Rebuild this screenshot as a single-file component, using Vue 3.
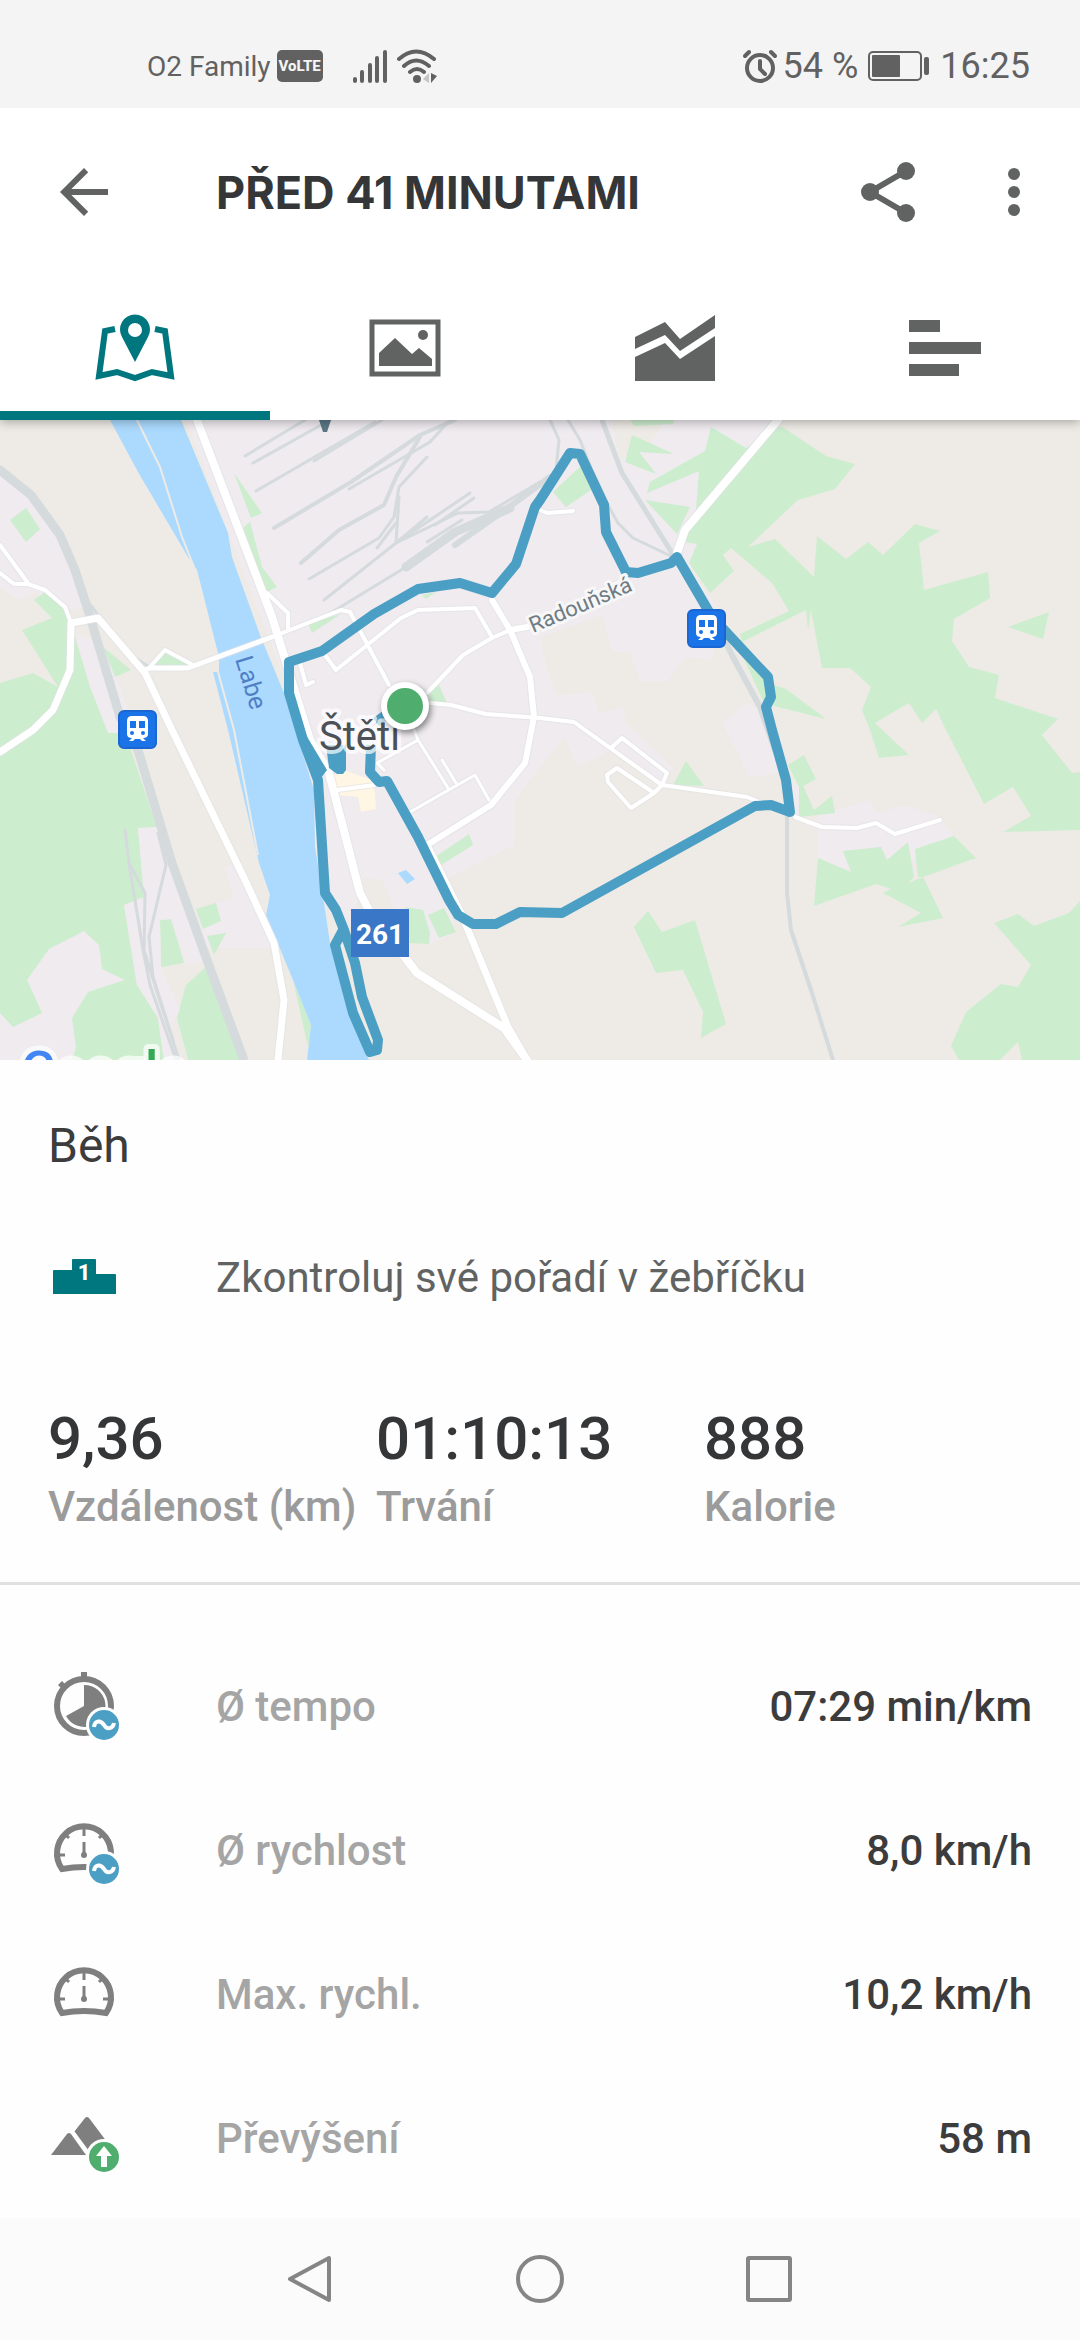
<script setup>
import { ref } from "vue";

const tabs = [
  { id: "map", label: "Mapa" },
  { id: "photos", label: "Fotky" },
  { id: "charts", label: "Grafy" },
  { id: "splits", label: "Mezičasy" },
];
const activeTab = ref("map");

const summary = [
  { label: "Vzdálenost (km)", value: "9,36" },
  { label: "Trvání", value: "01:10:13" },
  { label: "Kalorie", value: "888" },
];

const details = [
  { icon: "pace", badge: "avg", label: "Ø tempo", value: "07:29 min/km" },
  { icon: "speed", badge: "avg", label: "Ø rychlost", value: "8,0 km/h" },
  { icon: "speed", label: "Max. rychl.", value: "10,2 km/h" },
  { icon: "hills", badge: "up", label: "Převýšení", value: "58 m" },
];

// map layers
const urban = [
  "0,47 31,70 65,113 90,187 69,190 34,173 17,180 0,167",
  "75,213 103,223 140,320 108,313 90,267",
  "186,0 611,0 620,40 650,25 665,0 770,0 683,125 697,124 690,150 720,190 712,240 685,237 667,262 640,262 630,232 612,232 602,195 540,217 547,250 557,275 593,272 599,293 623,287 626,303 674,348 660,363 611,330 578,347 564,317 540,347 515,380 515,425 444,460 456,513 430,524 395,490 382,460 363,458 355,490 345,520 324,483 300,300",
  "722,303 747,283 764,290 778,353 750,358",
  "788,360 799,367 799,397 788,390",
  "817,397 836,390 870,380 877,393 905,385 939,397 953,415 915,440 880,460 850,455 818,438",
  "224,447 238,443 265,500 270,528 207,528 196,490 234,477",
];
const greens = [
  "26,88 40,109 26,122 10,100",
  "34,180 45,172 69,190 71,203 75,217 90,267 108,313 125,313 157,407 138,408 145,477 124,485 137,565 158,598 164,640 0,640 0,263 33,253 58,267 22,210 52,198",
  "103,227 131,250 115,257",
  "149,245 165,231 196,245",
  "234,53 262,93 251,98",
  "250,102 262,147 277,167 267,172 243,108",
  "308,203 341,194 312,213",
  "422,175 436,172 426,179",
  "429,273 439,265 447,283 430,283",
  "160,500 171,499 184,543 161,547",
  "196,489 216,483 221,501 203,509",
  "207,516 226,513 214,535",
  "208,545 241,640 188,640 177,598 186,565",
  "293,560 311,605 308,627",
  "435,437 469,414 473,425 441,445",
  "406,487 423,490 430,513 429,524 410,523",
  "428,495 444,488 456,512 439,518",
  "630,0 674,0 673,4 635,6",
  "632,15 674,34 639,32 656,54 625,42",
  "553,72 581,46 591,70 566,87",
  "711,7 746,28 781,6 826,36 855,44 835,69 798,80 748,127 775,119 814,157 817,116 846,139 868,122 883,135 915,104 940,111 919,123 924,170 988,152 990,178 954,199 952,221 969,247 999,255 995,278 1058,299 1042,315 1072,353 1080,352 1080,410 1003,412 1031,396 1013,367 984,384 946,310 936,289 922,303 909,283 875,303 909,335 879,338 870,310 862,290 871,267 850,248 822,248 811,190 808,210 806,190 742,222 740,214 789,191 772,163 731,128 723,135 734,151 710,173 689,143 697,124 685,122 696,90 699,51 647,73 650,62 705,31",
  "645,80 690,87 677,114",
  "1008,207 1049,192 1043,219",
  "774,265 786,269 826,299 774,286",
  "743,237 768,262 765,285",
  "673,365 686,341 704,366",
  "788,345 804,335 816,359 803,366 814,390 832,376 835,393 799,397 799,367",
  "818,438 851,452 843,431 881,427 887,440 908,422 914,457 908,463 923,457 943,498 898,507 921,493 883,473 891,469 876,464 814,486",
  "915,429 954,416 976,438 923,457 918,457",
  "648,491 662,512 695,500 726,604 701,618 703,592 683,550 656,553 634,507",
  "994,503 1018,494 1034,506 1069,493 1080,481 1080,640 1022,640 1018,622 1000,640 959,640 951,626 966,592 1001,564 1018,567 1031,545",
];
const clearings = [
  "27,560 49,529 84,511 99,525 102,549 125,560 88,572 72,598 76,628 72,640 0,640 0,593 13,607 42,593",
  "138,408 157,407 205,543 186,545 171,499 160,500 161,547 180,590 172,605 176,640 164,640 158,598 137,565 124,485 144,477",
];
const rails = [
  { width: 9, points: "0,50 31,75 60,115 75,150 88,190 120,297 138,330 172,443 207,540 244,640" },
  { width: 3, points: "88,182 110,210 130,235 148,246 190,247" },
  { width: 3, points: "125,410 129,443 143,530 150,565 176,640" },
  { width: 3, points: "129,443 145,473 144,530 158,575 179,640" },
  { width: 3, points: "158,413 166,445 149,517 153,557 173,620" },
  { width: 3, points: "245,36 305,0" },
  { width: 3, points: "253,43 330,0" },
  { width: 3, points: "314,41 382,0" },
  { width: 3, points: "256,71 375,2" },
  { width: 4, points: "274,108 351,62 420,15 455,0" },
  { width: 3, points: "349,69 430,22 450,0" },
  { width: 4, points: "301,143 339,110 384,85 396,57 420,17" },
  { width: 3, points: "309,159 379,118 394,97 399,67 427,37" },
  { width: 3, points: "399,77 396,123" },
  { width: 3, points: "324,180 396,123 458,93 489,92 540,62" },
  { width: 3, points: "377,128 396,103" },
  { width: 3, points: "396,123 427,97" },
  { width: 3, points: "396,123 470,73" },
  { width: 3, points: "435,105 474,78" },
  { width: 3, points: "324,197 406,147" },
  { width: 9, points: "406,147 455,112 510,88" },
  { width: 6, points: "455,125 505,90 550,57" },
  { width: 3, points: "427,122 462,100" },
  { width: 3, points: "550,0 559,20 556,50 545,70" },
  { width: 3, points: "568,0 580,20 592,50 609,87 618,103 633,118 673,137" },
  { width: 5, points: "602,0 622,53 672,133" },
  { width: 6, points: "678,137 709,190 733,237 760,287 775,330" },
  { width: 4, points: "787,397 787,473 791,510 812,573 833,640" },
];
const roads = [
  { width: 8, points: "197,0 272,197 310,320 329,353 360,473 370,492 417,553 504,608 527,640" },
  { width: 7, points: "427,425 461,493 508,607 527,640" },
  { width: 6, points: "492,180 510,210 530,257 534,297 525,343 491,385 427,425" },
  { width: 6, points: "510,210 527,207 626,160" },
  { width: 8, points: "778,0 685,110 677,133" },
  { width: 7, points: "0,332 33,310 53,290 70,250 71,203 98,198 145,253 172,310 245,460 274,523 284,580 278,640" },
  { width: 4, points: "0,153 14,164 28,164 45,170 65,187 71,203" },
  { width: 4, points: "0,125 28,163" },
  { width: 5, points: "145,250 150,248 188,248 272,217" },
  { width: 4, points: "272,217 341,190 350,192 358,207 389,265" },
  { width: 4, points: "150,247 165,230 193,245" },
  { width: 4, points: "267,173 288,193 288,210" },
  { width: 4, points: "325,235 336,250 401,198 418,190 475,188 492,217" },
  { width: 4, points: "427,273 463,235 492,218 510,210" },
  { width: 4, points: "300,243 306,265 313,262" },
  { width: 4, points: "430,283 451,285 486,294 540,298 574,302 585,310 662,365 747,377 762,383" },
  { width: 4, points: "612,327 622,318 667,353 662,365 654,373 617,348 607,355 608,362 631,388 654,373" },
  { width: 4, points: "795,397 822,407 857,408 876,403 895,414 940,400" },
  { width: 3, points: "384,350 377,343 418,320 448,368" },
  { width: 3, points: "418,320 410,300" },
  { width: 3, points: "442,340 456,363" },
  { width: 3, points: "410,392 475,355 489,380" },
  { width: 4, points: "337,370 375,365" },
  { width: 4, points: "540,90 547,93 573,91" },
];
const route =
  "371,325 370,352 379,362 387,361 418,417 449,480 458,495 473,504 496,504 520,492 562,493 755,386 771,385 790,392 786,360 772,310 766,287 771,277 768,257 712,197 677,137 671,143 638,153 626,152 606,112 604,85 580,34 570,33 540,80 535,87 516,144 492,173 460,163 418,169 374,194 322,231 289,242 289,273 303,320 318,360 325,473 336,490 344,510 355,543 362,577 378,620 377,630 370,632 353,593 335,525 343,510";
const stations = [
  { x: 118, y: 290 },
  { x: 687, y: 189 },
];
</script>

<template>
  <div class="screen">
    <div class="status">
      <span class="carrier">O2 Family</span>
      <span class="volte">VoLTE</span>
      <svg class="signal" viewBox="0 0 36 36">
        <path d="M3 31v2M10 24v9M18 17v16M25 10v23M33 4v29" stroke="#616161" stroke-width="4" stroke-linecap="round" />
      </svg>
      <svg class="wifi" viewBox="0 0 42 36">
        <path d="M3 11q17-15 35 0M8 18q12-11 25 0M14 24q7-6 14 0" fill="none" stroke="#616161" stroke-width="4" stroke-linecap="round" />
        <circle cx="21" cy="31" r="4" fill="#616161" />
        <path d="M33 25v10l-6-4z" fill="#c4c4c4" />
        <path d="M35 25v10l6-7z" fill="#616161" />
      </svg>
      <span class="spacer"></span>
      <svg class="alarm" viewBox="0 0 34 36">
        <circle cx="17" cy="20" r="13" fill="none" stroke="#616161" stroke-width="4" />
        <path d="M17 13v8l5 5" fill="none" stroke="#616161" stroke-width="4" stroke-linecap="round" />
        <path d="M2 8l4-4M32 8l-4-4" stroke="#616161" stroke-width="4" stroke-linecap="round" />
      </svg>
      <span class="clock">54 %</span>
      <svg class="battery" viewBox="0 0 62 30">
        <rect x="1" y="1" width="52" height="28" rx="4" fill="none" stroke="#616161" stroke-width="2" />
        <rect x="4" y="4" width="28" height="22" rx="1" fill="#616161" />
        <rect x="56" y="6" width="5" height="18" rx="2" fill="#616161" />
      </svg>
      <span class="clock">16:25</span>
    </div>

    <header class="top">
      <div class="bar">
        <button class="icon-btn" type="button" aria-label="Zpět">
          <svg viewBox="0 0 24 24"><path d="M20 11H7.8l5.6-5.6L12 4l-8 8 8 8 1.4-1.4L7.8 13H20z" /></svg>
        </button>
        <h1>PŘED 41 MINUTAMI</h1>
        <button class="icon-btn" type="button" aria-label="Sdílet">
          <svg viewBox="0 0 24 24">
            <path d="M18 5L6 12l12 7" fill="none" stroke="#616362" stroke-width="2" />
            <circle cx="18" cy="5" r="3" />
            <circle cx="6" cy="12" r="3" />
            <circle cx="18" cy="19" r="3" />
          </svg>
        </button>
        <button class="icon-btn" type="button" aria-label="Další možnosti">
          <svg viewBox="0 0 24 24">
            <circle cx="12" cy="6" r="2" />
            <circle cx="12" cy="12" r="2" />
            <circle cx="12" cy="18" r="2" />
          </svg>
        </button>
      </div>
      <nav class="tabs">
        <button
          v-for="tab in tabs"
          :key="tab.id"
          type="button"
          :aria-label="tab.label"
          :class="{ active: activeTab === tab.id }"
          @click="activeTab = tab.id"
        >
          <svg viewBox="0 0 84 84">
            <template v-if="tab.id === 'map'">
              <path d="M22 23l-10 2-6 45 18-4 18 6 17-6 19 4-6-45-10-2" fill="none" stroke="currentColor" stroke-width="6" />
              <path fill-rule="evenodd" d="M42 56L29 31a15 15 0 1 1 26 0zM42 17a7 7 0 1 0 0 14 7 7 0 0 0 0-14z" />
            </template>
            <template v-else-if="tab.id === 'photos'">
              <rect x="9" y="16" width="66" height="52" fill="none" stroke="currentColor" stroke-width="5" />
              <path d="M16 47l16-15 17 16 7-6 13 11v7H16z" />
              <circle cx="60" cy="29" r="5" />
            </template>
            <template v-else-if="tab.id === 'charts'">
              <path d="M2 31l30-15 15 17L82 9v13L47 45 32 29 2 43z" />
              <path d="M2 51l30-14 15 16 35-23v45H2z" />
            </template>
            <path v-else d="M6 14h31v12H6zM6 36h72v12H6zM6 58h50v12H6z" />
          </svg>
        </button>
      </nav>
    </header>

    <svg class="map" viewBox="0 0 1080 640" role="img" aria-label="Mapa trasy">
      <rect width="1080" height="640" fill="#eeebe6" />
      <polygon v-for="points in urban" :key="points" :points="points" fill="#efebef" />
      <polygon v-for="points in greens" :key="points" :points="points" fill="#cdedcf" />
      <polygon v-for="points in clearings" :key="points" :points="points" fill="#efebef" />
      <polygon
        points="110,0 138,52 188,137 197,150 219,237 219,252 213,252 228,310 259,443 270,475 266,495 293,560 311,605 307,640 369,640 348,593 330,523 324,483 315,427 314,370 284,273 260,215 232,137 228,113 181,0"
        fill="#acdaff"
      />
      <path d="M137 0l23 47 22 70 12 30M218 252l16 58 24 125" fill="none" stroke="#eeebe6" stroke-width="2" />
      <polygon points="398,453 406,450 415,459 407,464" fill="#acdaff" />
      <polygon points="341,349 372,360 375,373 376,389 361,392 358,377 339,375 332,357" fill="#fff6e3" />
      <g class="lines">
        <polyline v-for="rail in rails" :key="rail.points" :points="rail.points" :stroke-width="rail.width" stroke="#d5dadd" />
        <polyline v-for="road in roads" :key="road.points" :points="road.points" :stroke-width="road.width + 2" stroke="#dfe1e4" opacity="0.6" />
        <polyline v-for="road in roads" :key="road.points" :points="road.points" :stroke-width="road.width" stroke="#fff" />
      </g>
      <polygon points="319,0 331,0 327,12 323,12" fill="#5b7886" />
      <polyline class="route" :points="route" />
      <polygon points="300,305 312,325 327,350 318,362" fill="#4c9fc4" />
      <polygon points="326,325 346,325 346,350 343,354 337,354 329,348" fill="#4c9fc4" />
      <path d="M376 302l14-10" stroke="#4c9fc4" stroke-width="10" />

      <text class="street" transform="translate(533 213) rotate(-23)">Radouňská</text>
      <text class="water" transform="translate(235 239) rotate(73)">Labe</text>
      <text class="town" x="319" y="330">Štětí</text>
      <rect x="351" y="489" width="58" height="48" fill="#3a77c7" />
      <text class="road-no" x="380" y="524">261</text>

      <g v-for="station in stations" :key="station.x" :transform="`translate(${station.x} ${station.y})`">
        <rect x="1" y="1" width="37" height="37" rx="5" fill="#1b73e8" stroke="#1a66d2" stroke-width="2" />
        <path d="M14 6h11q5 0 5 5v13q0 4-5 4l3 3h-4l-2-2h-5l-2 2h-4l3-3q-5 0-5-4V11q0-5 5-5z" fill="#fff" />
        <path d="M12 11h6v7h-6zM21 11h6v7h-6z" fill="#1b73e8" />
        <circle cx="14" cy="23" r="2" fill="#1b73e8" />
        <circle cx="25" cy="23" r="2" fill="#1b73e8" />
      </g>

      <g class="start">
        <circle cx="405" cy="286" r="24" fill="#fff" />
        <circle cx="405" cy="286" r="18" fill="#4fad6d" />
      </g>
      <text class="google" x="21" y="668"><tspan fill="#4285f4">G</tspan><tspan fill="#ea4335">o</tspan><tspan fill="#fbbc05">o</tspan><tspan fill="#4285f4">g</tspan><tspan fill="#34a853">l</tspan><tspan fill="#ea4335">e</tspan></text>
    </svg>

    <main>
      <section class="overview">
        <h2>Běh</h2>
        <a class="ranking" href="#">
          <svg viewBox="0 0 72 72">
            <path d="M24 28V18q0-1 1-1h22q1 0 1 1v14h19q1 0 1 1v19H5V29q0-1 1-1z" fill="#00777f" />
            <text x="36" y="38">1</text>
          </svg>
          <span>Zkontroluj své pořadí v žebříčku</span>
        </a>
        <dl class="summary">
          <div v-for="item in summary" :key="item.label">
            <dt>{{ item.label }}</dt>
            <dd>{{ item.value }}</dd>
          </div>
        </dl>
      </section>

      <dl class="details">
        <div v-for="item in details" :key="item.label">
          <svg viewBox="0 0 72 72" aria-hidden="true">
            <g fill="#7f7f7f">
              <template v-if="item.icon === 'pace'">
                <circle cx="36" cy="36" r="27" fill="none" stroke="#7f7f7f" stroke-width="6" />
                <path d="M33 2h6v7h-6zM10 15l4-4 5 5-4 4z" />
                <path d="M36 36V15a21 21 0 1 1-18 31z" />
              </template>
              <template v-else-if="item.icon === 'speed'">
                <path d="M14 55a27 27 0 1 1 44 0q-22-4-44 0z" fill="none" stroke="#7f7f7f" stroke-width="6" />
                <path d="M36 15v7M21 24l-5-5M51 24l5-5M10 41h7M55 41h7M36 28v13" stroke="#7f7f7f" stroke-width="3" />
                <circle cx="36" cy="41" r="3" />
              </template>
              <template v-else>
                <path d="M3 53l16-21q2-2 4 0l15 21z" />
                <path d="M26 30l11-14q2-2 4 0l24 32-23 5z" />
                <path d="M25 30l17 23" stroke="#fff" stroke-width="3" />
              </template>
            </g>
            <g v-if="item.badge">
              <circle cx="56" cy="55" r="18" fill="#fff" />
              <circle cx="56" cy="55" r="15" :fill="item.badge === 'avg' ? '#4c9fc4' : '#4fad6d'" />
              <path v-if="item.badge === 'avg'" d="M46 57c1-7 7-7 10-2s9 4 10-2" fill="none" stroke="#fff" stroke-width="4" />
              <path v-else d="M56 44l8 10h-5v11h-6V54h-5z" fill="#fff" />
            </g>
          </svg>
          <dt>{{ item.label }}</dt>
          <dd>{{ item.value }}</dd>
        </div>
      </dl>
    </main>

    <nav class="system">
      <button type="button" aria-label="Zpět">
        <svg viewBox="0 0 48 48"><path d="M42 3v42L3 24z" /></svg>
      </button>
      <button type="button" aria-label="Domů">
        <svg viewBox="0 0 48 48"><circle cx="24" cy="24" r="22" /></svg>
      </button>
      <button type="button" aria-label="Poslední aplikace">
        <svg viewBox="0 0 48 48"><rect x="3" y="3" width="42" height="42" rx="1" /></svg>
      </button>
    </nav>
  </div>
</template>

<style>
body {
  margin: 0;
  background: #fefefe;
}
</style>

<style scoped>
.screen {
  display: flex;
  flex-direction: column;
  min-height: 100vh;
  font-family: Roboto, "Noto Sans", sans-serif;
  color: #3c3c3c;
}
svg {
  display: block;
}
button {
  padding: 0;
  border: 0;
  background: none;
  cursor: pointer;
}
h1,
h2,
dl,
dd {
  margin: 0;
}

.status {
  position: relative;
  z-index: 2;
  box-sizing: border-box;
  height: 108px;
  padding: 24px 50px 0 147px;
  display: flex;
  align-items: center;
  background: #f4f4f4;
  color: #616161;
}
.carrier {
  font-size: 28px;
}
.volte {
  width: 46px;
  margin-left: 6px;
  border-radius: 5px;
  background: #616161;
  color: #f4f4f4;
  font-size: 15px;
  font-weight: 800;
  line-height: 32px;
  text-align: center;
}
.signal {
  width: 36px;
  height: 36px;
  margin-left: 29px;
}
.wifi {
  width: 42px;
  height: 36px;
  margin-left: 8px;
}
.spacer {
  flex: 1;
}
.alarm {
  width: 34px;
  height: 36px;
  margin-right: 6px;
}
.clock {
  font-size: 36px;
}
.battery {
  width: 62px;
  height: 30px;
  margin: 0 10px;
}

.top {
  position: relative;
  z-index: 1;
  background: #fff;
  box-shadow: 0 2px 10px rgba(0, 0, 0, 0.3);
}
.bar {
  height: 168px;
  padding: 0 30px 0 48px;
  display: flex;
  align-items: center;
}
.icon-btn {
  width: 72px;
  height: 72px;
}
.icon-btn svg {
  fill: #616362;
}
.icon-btn:last-child {
  margin-left: 54px;
}
h1 {
  flex: 1;
  margin-left: 96px;
  color: #353638;
  font-family: Inter, Roboto, sans-serif;
  font-size: 45px;
  font-weight: 700;
}
.tabs {
  display: flex;
  height: 144px;
}
.tabs button {
  flex: 1;
  display: flex;
  align-items: center;
  justify-content: center;
  color: #616362;
}
.tabs button.active {
  color: #00777f;
  box-shadow: inset 0 -9px #00777f;
}
.tabs svg {
  width: 84px;
  height: 84px;
  fill: currentColor;
}

.map {
  width: 100%;
  height: auto;
}
.lines {
  fill: none;
  stroke-linejoin: round;
  stroke-linecap: round;
}
.route {
  fill: none;
  stroke: #4c9fc4;
  stroke-width: 10px;
  stroke-linejoin: round;
}
.map text {
  paint-order: stroke;
  stroke-linejoin: round;
}
.street {
  font-size: 22px;
  fill: #6f7c84;
  stroke: #f8f7f8;
  stroke-width: 6px;
}
.water {
  font-size: 25px;
  fill: #4f80c4;
}
.town {
  font-size: 40px;
  fill: #4b5157;
  stroke: rgba(255, 255, 255, 0.7);
  stroke-width: 8px;
}
.road-no {
  font-size: 28px;
  font-weight: 700;
  fill: #fff;
  text-anchor: middle;
}
.google {
  font-size: 52px;
  font-weight: 500;
  stroke: rgba(255, 255, 255, 0.7);
  stroke-width: 10px;
}
.start {
  filter: drop-shadow(2px 3px 3px rgba(0, 0, 0, 0.45));
}

.overview {
  padding: 58px 48px 50px;
  border-bottom: 3px solid #e0e0e0;
}
h2 {
  font-size: 48px;
  font-weight: 400;
  line-height: 56px;
}
.ranking {
  display: flex;
  align-items: center;
  gap: 96px;
  margin-top: 68px;
  color: #616362;
  font-size: 42px;
  line-height: 50px;
  text-decoration: none;
}
.ranking svg {
  width: 72px;
  height: 72px;
}
.ranking text {
  font-size: 22px;
  font-weight: 800;
  fill: #fff;
  text-anchor: middle;
}
.summary {
  display: grid;
  grid-template-columns: repeat(3, 1fr);
  margin-top: 90px;
  font-weight: 500;
}
.summary div {
  display: flex;
  flex-direction: column-reverse;
  gap: 8px;
}
.summary dt {
  color: #9b9b9b;
  font-size: 42px;
  line-height: 50px;
  white-space: nowrap;
}
.summary dd {
  color: #353638;
  font-size: 60px;
  line-height: 70px;
}
.details {
  padding: 49px 48px 8px;
  font-size: 42px;
  font-weight: 500;
}
.details div {
  display: flex;
  align-items: center;
  height: 144px;
}
.details svg {
  width: 72px;
  height: 72px;
  margin-right: 96px;
}
.details dt {
  flex: 1;
  color: #a5a5a5;
}

.system {
  height: 122px;
  margin-top: auto;
  display: flex;
  align-items: center;
  justify-content: center;
  gap: 181px;
  background: #fbfbfb;
}
.system svg {
  width: 48px;
  height: 48px;
  fill: none;
  stroke: #858585;
  stroke-width: 4px;
  stroke-linejoin: round;
}
</style>
